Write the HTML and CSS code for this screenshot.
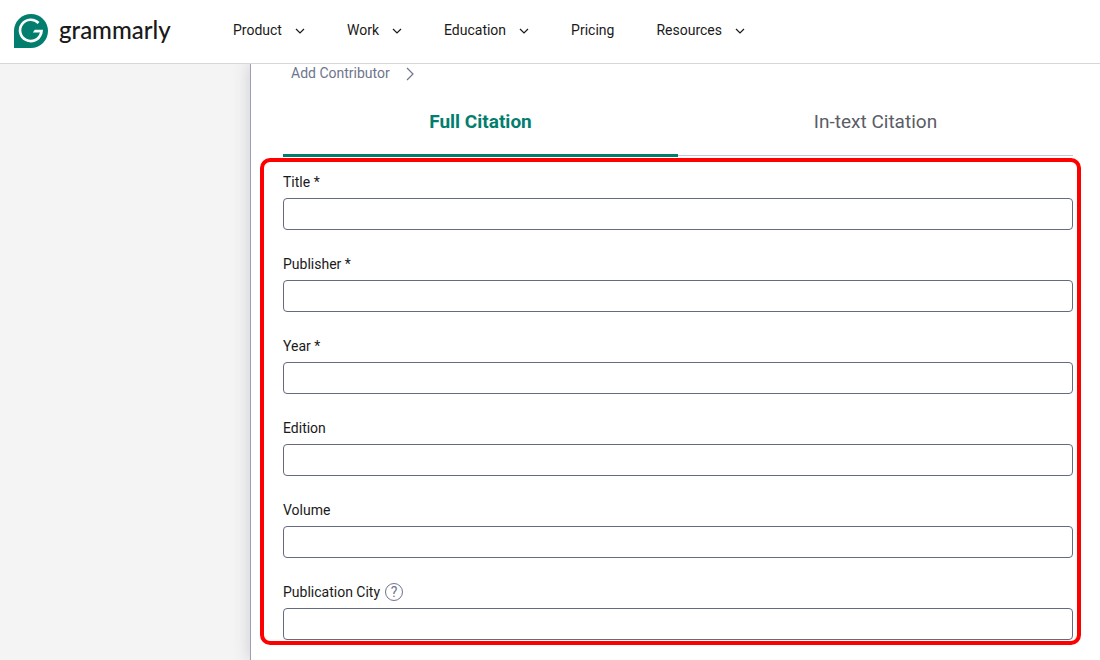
FILE: index.html
```html
<!DOCTYPE html>
<html lang="en">
<head>
	<meta charset="utf-8">
	<title>Citation Generator | Grammarly</title>
	<link rel="stylesheet" href="styles.css">
</head>
<body>
	<header class="header">
		<a href="#" class="logo">
			<svg class="logo-mark" viewBox="0 0 34 34">
				<path d="M17 0a17 17 0 0 1 0 34H0V17A17 17 0 0 1 17 0z" fill="#027e6f"/>
				<path d="M24.500 9A10.700 10.700 0 1 0 27 19.500" fill="none" stroke="#fff" stroke-width="2.600"/>
				<path d="M20.800 15.800H29L28.400 20H25.800L26 18.600H18.800z" fill="#fff"/>
			</svg>
			<span>grammarly</span>
		</a>
		<nav class="nav">
			<button type="button" class="nav-item">Product
				<svg class="arrow" viewBox="0 0 10 10"><path d="M1 3l4 4 4-4"/></svg>
			</button>
			<button type="button" class="nav-item">Work
				<svg class="arrow" viewBox="0 0 10 10"><path d="M1 3l4 4 4-4"/></svg>
			</button>
			<button type="button" class="nav-item">Education
				<svg class="arrow" viewBox="0 0 10 10"><path d="M1 3l4 4 4-4"/></svg>
			</button>
			<a href="#" class="nav-item">Pricing</a>
			<button type="button" class="nav-item">Resources
				<svg class="arrow" viewBox="0 0 10 10"><path d="M1 3l4 4 4-4"/></svg>
			</button>
		</nav>
	</header>

	<div class="page">
		<main class="panel">
			<button type="button" class="add">Add Contributor
				<svg class="add-arrow" viewBox="0 0 8 14"><path d="M1 1l6 6-6 6"/></svg>
			</button>

			<div class="tabs">
				<button type="button" class="tab active">Full Citation</button>
				<button type="button" class="tab">In-text Citation</button>
			</div>

			<form action="#" class="fields">
				<div class="field">
					<label for="title">Title *</label>
					<input type="text" id="title" name="title">
				</div>
				<div class="field">
					<label for="publisher">Publisher *</label>
					<input type="text" id="publisher" name="publisher">
				</div>
				<div class="field">
					<label for="year">Year *</label>
					<input type="text" id="year" name="year">
				</div>
				<div class="field">
					<label for="edition">Edition</label>
					<input type="text" id="edition" name="edition">
				</div>
				<div class="field">
					<label for="volume">Volume</label>
					<input type="text" id="volume" name="volume">
				</div>
				<div class="field">
					<label for="city">Publication City <span class="help">?</span></label>
					<input type="text" id="city" name="city">
				</div>
			</form>
		</main>
	</div>
</body>
</html>
```
FILE: styles.css
```css
*{
	box-sizing: border-box;
}
body{
	margin: 0;
	min-height: 100vh;
	display: flex;
	flex-direction: column;
	background: #f4f4f4;
	color: #1a1a1a;
	font-family: Roboto, "Liberation Sans", sans-serif;
	font-size: 14px;
	line-height: 20px;
}
button{
	font: inherit;
	color: inherit;
	background: none;
	border: none;
	padding: 0;
	cursor: pointer;
}
a{
	color: inherit;
	text-decoration: none;
}
svg{
	fill: none;
}

/* Header */
.header{
	display: flex;
	align-items: center;
	height: 64px;
	padding: 0 14px 2px;
	background: #fff;
	border-bottom: 1px solid #d5d7da;
}
.logo{
	display: flex;
	align-items: center;
	gap: 11px;
	width: 219px;
	font-family: Lato, sans-serif;
	font-size: 24px;
	font-weight: 500;
	line-height: 32px;
}
.logo span{
	padding-bottom: 2px;
}
.logo-mark{
	width: 34px;
	height: 34px;
}
.nav{
	display: flex;
	gap: 42px;
	padding-bottom: 2px;
}
.nav-item{
	display: flex;
	align-items: center;
	gap: 13px;
}
.arrow{
	width: 10px;
	height: 10px;
	margin-top: 2px;
	stroke: #1a1a1a;
	stroke-width: 1.2;
}

/* Citation panel */
.page{
	flex: 1;
	display: flex;
}
.panel{
	flex: 1;
	margin-left: 250px;
	background: #fff;
	border-left: 1px solid #9a9fb5;
	box-shadow: 0 0 16px rgba(60, 66, 100, 0.22);
	clip-path: inset(0 0 0 -40px);
}
.add{
	display: flex;
	align-items: center;
	gap: 16px;
	height: 18px;
	margin-left: 40px;
	color: #6d758d;
}
.add-arrow{
	width: 8px;
	height: 14px;
	margin-top: 2px;
	stroke: #6d758d;
	stroke-width: 1.2;
}
.tabs{
	display: flex;
	height: 75px;
	margin: 0 27px 0 32px;
}
.tab{
	flex: 1;
	margin-bottom: 1px;
	padding-top: 6px;
	border-bottom: 1px solid #c2c8d8;
	color: #5a5d66;
	font-size: 19px;
}
.tab.active{
	margin-bottom: 0;
	padding-top: 7px;
	border-bottom: 3px solid #027e6f;
	color: #027e6f;
	font-weight: bold;
}
.fields{
	display: flex;
	flex-direction: column;
	gap: 24px;
	margin: 1px 19px 15px 9px;
	padding: 10px 4px 1px 19px;
	border: 4px solid #f00;
	border-radius: 10px;
}
.field{
	display: flex;
	flex-direction: column;
	gap: 6px;
}
.field label{
	display: flex;
	align-items: center;
	gap: 5px;
}
.field input{
	width: 100%;
	height: 32px;
	padding: 0 10px;
	border: 1px solid #646b81;
	border-radius: 4px;
	background: #fff;
	font: inherit;
}
.help{
	width: 18px;
	height: 18px;
	border: 1px solid #6d758d;
	border-radius: 50%;
	color: #6d758d;
	font-size: 14px;
	line-height: 17px;
	text-align: center;
}
```
